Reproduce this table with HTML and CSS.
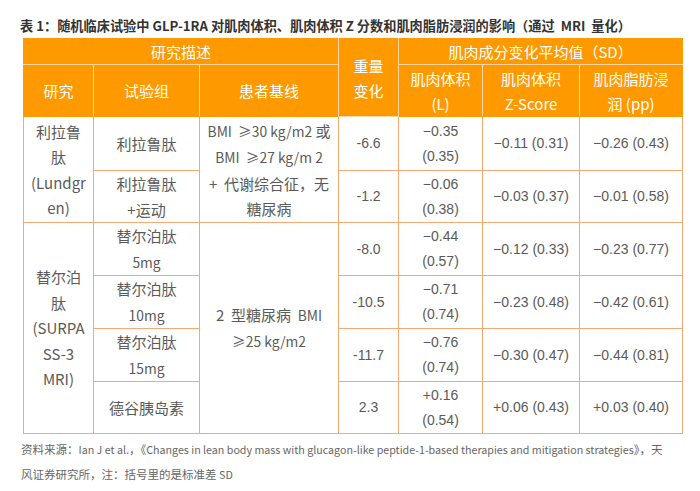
FILE: index.html
```html
<!DOCTYPE html>
<html lang="zh-CN">
<head>
<meta charset="utf-8">
<link rel="stylesheet" href="styles.css">
</head>
<body>
<div class="page">
  <div class="title">表 1：随机临床试验中 GLP-1RA 对肌肉体积、肌肉体积 Z 分数和肌肉脂肪浸润的影响（通过&nbsp;&nbsp;MRI&nbsp;&nbsp;量化）</div>
  <table class="data">
    <colgroup>
      <col class="c1"><col class="c2"><col class="c3"><col class="c4"><col class="c5"><col class="c6"><col class="c7">
    </colgroup>
    <thead>
      <tr class="h1">
        <th colspan="3" class="first">研究描述</th>
        <th rowspan="2">重量<br>变化</th>
        <th colspan="3" class="last">肌肉成分变化平均值（SD）</th>
      </tr>
      <tr class="h2">
        <th class="first">研究</th>
        <th>试验组</th>
        <th>患者基线</th>
        <th>肌肉体积<br>(L)</th>
        <th>肌肉体积<br>Z-Score</th>
        <th class="last">肌肉脂肪浸<br>润 (pp)</th>
      </tr>
    </thead>
    <tbody>
      <tr class="r54">
        <td rowspan="2" class="study">利拉鲁<br>肽<br>(Lundgr<br>en)</td>
        <td>利拉鲁肽</td>
        <td rowspan="2" class="base"><span class="lat">BMI&nbsp;&nbsp;≥30 kg/m2</span> 或<br><span class="lat">BMI&nbsp;&nbsp;≥27 kg/m 2</span><br>+&nbsp;&nbsp;代谢综合征，无<br>糖尿病</td>
        <td class="num">-6.6</td>
        <td class="num">−0.35<br>(0.35)</td>
        <td class="num">−0.11 (0.31)</td>
        <td class="num">−0.26 (0.43)</td>
      </tr>
      <tr class="r52">
        <td>利拉鲁肽<br>+运动</td>
        <td class="num">-1.2</td>
        <td class="num">−0.06<br>(0.38)</td>
        <td class="num">−0.03 (0.37)</td>
        <td class="num">−0.01 (0.58)</td>
      </tr>
      <tr class="r53">
        <td rowspan="4" class="study">替尔泊<br>肽<br>(SURPA<br>SS-3<br>MRI)</td>
        <td>替尔泊肽<br><span class="lat">5mg</span></td>
        <td rowspan="4" class="base">2&nbsp;&nbsp;型糖尿病&nbsp;&nbsp;<span class="lat">BMI</span><br><span class="lat">≥25 kg/m2</span></td>
        <td class="num">-8.0</td>
        <td class="num">−0.44<br>(0.57)</td>
        <td class="num">−0.12 (0.33)</td>
        <td class="num">−0.23 (0.77)</td>
      </tr>
      <tr class="r52">
        <td>替尔泊肽<br><span class="lat">10mg</span></td>
        <td class="num">-10.5</td>
        <td class="num">−0.71<br>(0.74)</td>
        <td class="num">−0.23 (0.48)</td>
        <td class="num">−0.42 (0.61)</td>
      </tr>
      <tr class="r53">
        <td>替尔泊肽<br><span class="lat">15mg</span></td>
        <td class="num">-11.7</td>
        <td class="num">−0.76<br>(0.74)</td>
        <td class="num">−0.30 (0.47)</td>
        <td class="num">−0.44 (0.81)</td>
      </tr>
      <tr class="r52">
        <td>德谷胰岛素</td>
        <td class="num">2.3</td>
        <td class="num">+0.16<br>(0.54)</td>
        <td class="num">+0.06 (0.43)</td>
        <td class="num">+0.03 (0.40)</td>
      </tr>
    </tbody>
  </table>
  <div class="note">资料来源：<span class="note-lat">Ian J et al.</span>，《<span class="note-lat">Changes in lean body mass with glucagon-like peptide-1-based therapies and mitigation strategies</span>》，天<br>风证券研究所，注：括号里的是标准差 <span class="note-lat">SD</span></div>
</div>
</body>
</html>
```

FILE: styles.css
```css
html, body {
  margin: 0;
  padding: 0;
  background: #ffffff;
}

.page {
  padding: 16px 0 0 20px;
  font-family: "Noto Sans CJK SC", "Noto Sans", sans-serif;
}

.title {
  font-size: 13.2px;
  line-height: 20px;
  font-weight: bold;
  color: #333333;
  white-space: nowrap;
  margin-bottom: 2px;
}

.data {
  margin-left: 3px;
  border-collapse: collapse;
  table-layout: fixed;
  width: 659px;
}

.c1 { width: 70px; }
.c2 { width: 106px; }
.c3 { width: 139px; }
.c4 { width: 60px; }
.c5 { width: 84px; }
.c6 { width: 97px; }
.c7 { width: 103px; }

.data th {
  background: #ff9900;
  color: #ffffff;
  font-weight: normal;
  font-size: 15px;
  line-height: 25px;
  padding: 0;
  text-align: center;
  vertical-align: middle;
  border: 1px solid #fed9a6;
  border-top-color: #ff9900;
}

.data .h2 th {
  border-top-color: #fed9a6;
  border-bottom-color: #ff9900;
}

.data th.first { border-left-color: #ff9900; }
.data th.last { border-right-color: #ff9900; }

.h1 { height: 26px; }
.h2 { height: 52px; }

.data td {
  font-size: 15px;
  line-height: 25.5px;
  color: #5a5a5a;
  text-align: center;
  vertical-align: middle;
  padding: 0;
  border: 1px solid #f6a974;
}

.data td.num {
  font-family: "Liberation Sans", Arial, sans-serif;
  font-size: 14px;
  line-height: 25px;
}

.lat { font-size: 13.8px; }

.r54 { height: 54px; }
.r53 { height: 53px; }
.r52 { height: 52px; }

.note {
  margin-top: 3px;
  margin-left: 1px;
  font-size: 11.5px;
  line-height: 25px;
  color: #666666;
  white-space: nowrap;
}

.note-lat { font-size: 10.7px; }
```
